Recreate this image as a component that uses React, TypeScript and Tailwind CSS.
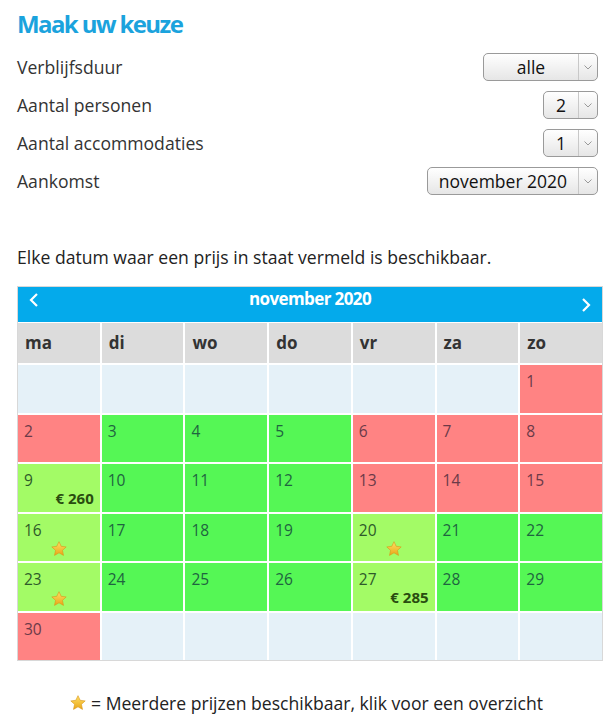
import React from "react";

type Cell = {
  day?: number;
  kind: "empty" | "red" | "green" | "light";
  price?: string;
  star?: boolean;
};

const cells: Cell[] = [
  { kind: "empty" }, { kind: "empty" }, { kind: "empty" }, { kind: "empty" }, { kind: "empty" }, { kind: "empty" },
  { day: 1, kind: "red" },
  { day: 2, kind: "red" }, { day: 3, kind: "green" }, { day: 4, kind: "green" }, { day: 5, kind: "green" },
  { day: 6, kind: "red" }, { day: 7, kind: "red" }, { day: 8, kind: "red" },
  { day: 9, kind: "light", price: "€ 260" }, { day: 10, kind: "green" }, { day: 11, kind: "green" }, { day: 12, kind: "green" },
  { day: 13, kind: "red" }, { day: 14, kind: "red" }, { day: 15, kind: "red" },
  { day: 16, kind: "light", star: true }, { day: 17, kind: "green" }, { day: 18, kind: "green" }, { day: 19, kind: "green" },
  { day: 20, kind: "light", star: true }, { day: 21, kind: "green" }, { day: 22, kind: "green" },
  { day: 23, kind: "light", star: true }, { day: 24, kind: "green" }, { day: 25, kind: "green" }, { day: 26, kind: "green" },
  { day: 27, kind: "light", price: "€ 285" }, { day: 28, kind: "green" }, { day: 29, kind: "green" },
  { day: 30, kind: "red" }, { kind: "empty" }, { kind: "empty" }, { kind: "empty" }, { kind: "empty" }, { kind: "empty" }, { kind: "empty" },
];

const kindClass: Record<Cell["kind"], string> = {
  empty: "bg-[#e5f1f8]",
  red: "bg-[#ff8383] text-[#6b3a48]",
  green: "bg-[#55f755] text-[#1f6440]",
  light: "bg-[#a3fb66] text-[#2f5a2a]",
};

const Star = ({ size = 20 }: { size?: number }) => (
  <svg width={size} height={size} viewBox="0 0 24 24">
    <defs>
      <linearGradient id="sg" x1="0" y1="0" x2="0" y2="1">
        <stop offset="0" stopColor="#ffe066" />
        <stop offset="1" stopColor="#e9a617" />
      </linearGradient>
    </defs>
    <path
      d="M12 2.2l2.9 6.2 6.7.8-5 4.6 1.4 6.7L12 17.1l-6 3.4 1.4-6.7-5-4.6 6.7-.8z"
      fill="url(#sg)"
      stroke="#d9961a"
      strokeWidth="0.8"
      strokeLinejoin="round"
    />
  </svg>
);

const Select = ({ value, width }: { value: string; width: string }) => (
  <div
    className={`flex h-[28px] ${width} rounded-[5px] border border-[#9a9a9a] bg-gradient-to-b from-white to-[#e6e6e6] text-[17.5px] text-[#111]`}
  >
    <div className="flex flex-1 items-center justify-center">{value}</div>
    <div className="flex w-[19px] items-center justify-center border-l border-[#c8c8c8]">
      <svg width="8" height="5" viewBox="0 0 8 5">
        <path d="M0.5 0.5L4 4L7.5 0.5" fill="none" stroke="#999" strokeWidth="1" />
      </svg>
    </div>
  </div>
);

const rows = [
  { label: "Verblijfsduur", value: "alle", width: "w-[115px]" },
  { label: "Aantal personen", value: "2", width: "w-[55px]" },
  { label: "Aantal accommodaties", value: "1", width: "w-[55px]" },
  { label: "Aankomst", value: "november 2020", width: "w-[171px]" },
];

export default function App() {
  return (
    <div className="w-[612px] bg-white px-[17px] pt-[8px] font-['Open_Sans',sans-serif] text-[#333]">
      <h1 className="text-[24px] font-bold leading-[32px] tracking-[-1.6px] text-[#1ba3dd]">Maak uw keuze</h1>

      <div className="-mr-[3px] mt-[13px] flex flex-col gap-[10px]">
        {rows.map((r) => (
          <div key={r.label} className="flex items-center justify-between">
            <span className="text-[17.6px] leading-[28px]">{r.label}</span>
            <Select value={r.value} width={r.width} />
          </div>
        ))}
      </div>

      <p className="mt-[50px] text-[17.6px] leading-[24px] text-[#222]">
        Elke datum waar een prijs in staat vermeld is beschikbaar.
      </p>

      <div className="mt-[17px] w-[586px] border border-[#d8d8d8]">
        <div className="flex h-[35px] items-start justify-between bg-[#04aaeb] px-[10px] pt-[1px] text-white">
          <svg width="12" height="16" viewBox="0 0 12 16" className="mt-[4px]">
            <path d="M9 2L3 8l6 6" fill="none" stroke="white" strokeWidth="2.2" />
          </svg>
          <span className="text-[17px] font-bold leading-[22px] tracking-[-0.6px]">november 2020</span>
          <svg width="12" height="16" viewBox="0 0 12 16" className="mt-[9px]">
            <path d="M3 2l6 6-6 6" fill="none" stroke="white" strokeWidth="2.2" />
          </svg>
        </div>
        <div className="grid grid-cols-7 gap-[2px] bg-white pt-[1px]">
          {["ma", "di", "wo", "do", "vr", "za", "zo"].map((d) => (
            <div key={d} className="flex h-[40px] items-center bg-[#dcdcdc] pl-[7px] text-[17px] font-bold text-[#333]">
              {d}
            </div>
          ))}
          {cells.map((c, i) => (
            <div key={i} className={`relative h-[47.5px] ${kindClass[c.kind]}`}>
              {c.day && <span className="absolute left-[6px] top-[6px] text-[15.5px] leading-[20px]">{c.day}</span>}
              {c.price && (
                <span className="absolute bottom-[4px] right-[6px] text-[15px] font-bold leading-[20px] text-[#2a4d10]">
                  {c.price}
                </span>
              )}
              {c.star && (
                <span className="absolute bottom-[3px] left-1/2 -translate-x-1/2">
                  <Star size={18} />
                </span>
              )}
            </div>
          ))}
        </div>
      </div>

      <div className="mt-[29px] flex items-center justify-center gap-[4px] text-[17.6px] text-[#222]">
        <Star size={18} />
        <span>= Meerdere prijzen beschikbaar, klik voor een overzicht</span>
      </div>
    </div>
  );
}
